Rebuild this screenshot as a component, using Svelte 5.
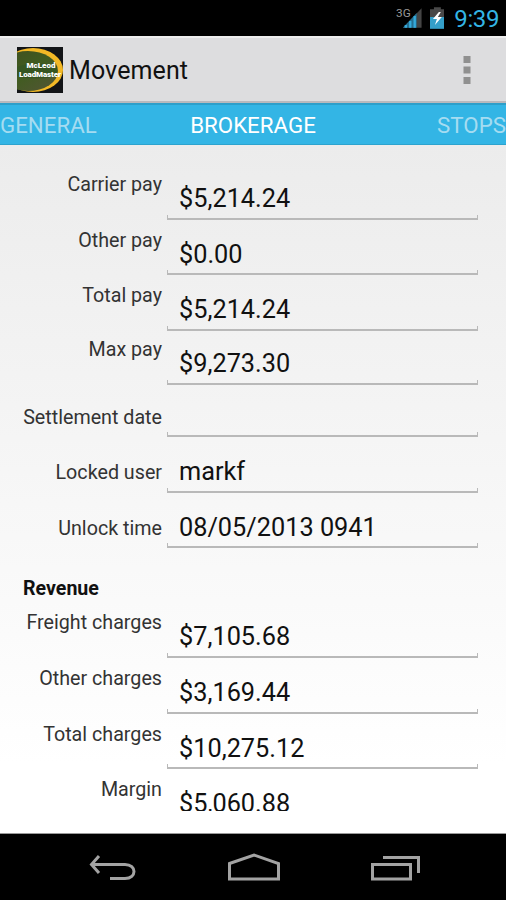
<script lang="ts">
	type Row = { label: string; value: string; height: number; level?: boolean; tight?: boolean };

	const pay: Row[] = [
		{ label: 'Carrier pay', value: '$5,214.24', height: 56 },
		{ label: 'Other pay', value: '$0.00', height: 55 },
		{ label: 'Total pay', value: '$5,214.24', height: 56 },
		{ label: 'Max pay', value: '$9,273.30', height: 54, tight: true },
		{ label: 'Settlement date', value: '', height: 52, level: true, tight: true },
		{ label: 'Locked user', value: 'markf', height: 56, level: true },
		{ label: 'Unlock time', value: '08/05/2013 0941', height: 55, level: true }
	];

	const revenue: Row[] = [
		{ label: 'Freight charges', value: '$7,105.68', height: 56 },
		{ label: 'Other charges', value: '$3,169.44', height: 56 },
		{ label: 'Total charges', value: '$10,275.12', height: 55 },
		{ label: 'Margin', value: '$5,060.88', height: 56 }
	];
</script>

{#snippet field(row: Row)}
	<div class={['row', row.level && 'level', row.tight && 'tight']} style="height: {row.height}px">
		<span class="label">{row.label}</span>
		<span class="value">{row.value}</span>
	</div>
{/snippet}

<div class="phone">
	<div class="status">
		<svg class="signal" width="28" height="24" viewBox="0 0 28 24">
			<path d="M7 22 26 2V22Z" fill="#444" />
			<path d="M7 22 21 7V22Z" fill="#236f91" />
			<path d="M10 22v-3M14.500 22v-7M19 22V10" stroke="#35a9da" stroke-width="2.4" />
			<text x="0" y="11" font-size="12" fill="#999" stroke="#000" stroke-width="2" paint-order="stroke">3G</text>
		</svg>
		<svg class="battery" width="15" height="22" viewBox="0 0 15 22">
			<path d="M4 0h7v2h4v8H0V2h4Z" fill="#484848" />
			<path d="M0 10h15v12H0Z" fill="#349fc9" />
			<path d="m9 5-6 7h4l-2 6 7-8H8l3-5Z" fill="#fff" />
		</svg>
		<span class="clock">9:39</span>
	</div>

	<header>
		<svg class="logo" width="46" height="46" viewBox="0 0 46 46">
			<defs>
				<linearGradient id="green" x1="0" y1="0" x2="1" y2="1">
					<stop offset="0" stop-color="#3f4d20" />
					<stop offset=".5" stop-color="#405c20" />
					<stop offset="1" stop-color="#555437" />
				</linearGradient>
			</defs>
			<rect width="46" height="46" fill="#121417" />
			<ellipse cx="16" cy="23" rx="30" ry="22" fill="#f2b826" />
			<ellipse cx="11" cy="24" rx="30" ry="20" fill="url(#green)" />
			<path d="M0 20Q20 13 40 19V29Q18 34 0 29Z" fill="#365522" />
			<text x="24" y="21" textLength="29">McLeod</text>
			<text x="23" y="30" textLength="42">LoadMaster</text>
		</svg>
		<h1>Movement</h1>
		<svg class="more" width="8" height="30" viewBox="0 0 8 30">
			<path d="M.5 1h7v7h-7ZM.5 11.500h7v7h-7ZM.5 22h7v7h-7Z" fill="#909090" />
		</svg>
	</header>

	<nav>
		<span>GENERAL</span>
		<span class="active">BROKERAGE</span>
		<span>STOPS</span>
	</nav>

	<main>
		<div class="scroll">
			{#each pay as row}
				{@render field(row)}
			{/each}
			<h2>Revenue</h2>
			{#each revenue as row}
				{@render field(row)}
			{/each}
		</div>
	</main>

	<footer>
		<svg width="50" height="30" viewBox="0 0 50 30">
			<path d="M12 3 4.500 11.500 12 20M4.500 11.500H38C50 11.500 50 25.500 38 25.500H23" />
		</svg>
		<svg width="54" height="30" viewBox="0 0 54 30">
			<path d="M2.500 10.500 27 2 51.500 10.500V26H2.500Z" />
		</svg>
		<svg width="50" height="30" viewBox="0 0 50 30">
			<path d="M1.500 11.500H39.500V26H1.500ZM12 4.500H47.500V20" />
		</svg>
	</footer>
</div>

<style>
	:global(body) {
		margin: 0;
	}

	.phone {
		display: flex;
		flex-direction: column;
		width: 506px;
		height: 900px;
		overflow: hidden;
		font-family: Roboto, sans-serif;
		color: #111;
	}

	.status {
		display: flex;
		height: 36px;
		box-sizing: border-box;
		padding: 0 7px 0 396px;
		background: #000;
	}

	.signal {
		margin-top: 6px;
	}

	.battery {
		margin: 7px 0 0 6px;
	}

	.clock {
		margin-left: 10px;
		font-size: 24px;
		line-height: 38px;
		letter-spacing: -0.4px;
		color: #33b5e5;
	}

	header {
		display: flex;
		align-items: center;
		height: 67px;
		box-sizing: border-box;
		padding: 0 35px 0 17px;
		border-top: 2px solid #eee;
		border-bottom: 2px solid #b9b9bd;
		background: #dddddf;
	}

	.logo text {
		font-size: 8px;
		font-weight: 900;
		fill: #fff;
		text-anchor: middle;
	}

	h1 {
		flex: 1;
		margin: 2px 0 0 6px;
		font-size: 25px;
		font-weight: 400;
		letter-spacing: 0.1px;
	}

	nav {
		display: grid;
		grid-template-columns: 1fr auto 1fr;
		height: 42px;
		box-sizing: border-box;
		border-top: 2px solid #2d9fca;
		border-bottom: 1px solid #2ca3ce;
		background: #33b5e5;
		font-size: 22.3px;
		line-height: 40px;
		color: #a5dcf1;
	}

	nav span:last-child {
		text-align: right;
	}

	.active {
		color: #fff;
	}

	main {
		height: 689px;
		box-sizing: border-box;
		padding: 19px 28px 0 22px;
		border-bottom: 1px solid #999;
		background: linear-gradient(#ececec, #fff 90%);
	}

	.scroll {
		height: 647px;
		overflow: hidden;
	}

	.row {
		display: flex;
	}

	.label {
		width: 140px;
		margin-right: 5px;
		padding-top: 8px;
		font-size: 19.7px;
		line-height: 25px;
		text-align: right;
		white-space: nowrap;
		color: #333;
	}

	.tight .label {
		padding-top: 6px;
	}

	.level .label {
		padding-top: 23px;
	}

	.level.tight .label {
		padding-top: 20px;
	}

	.value {
		position: relative;
		flex: 1;
		box-sizing: border-box;
		padding: 20px 0 0 12px;
		border-bottom: 2px solid #b9b9b9;
		font-size: 25.3px;
		line-height: 30px;
	}

	.tight .value {
		padding-top: 18px;
	}

	/* raised ends of the input underline */
	.value::after {
		content: '';
		position: absolute;
		inset: auto 0 0;
		height: 3px;
		border: solid #b9b9b9;
		border-width: 0 1.5px;
	}

	h2 {
		height: 54px;
		margin: 0;
		padding-left: 1px;
		box-sizing: border-box;
		padding-top: 28px;
		font-size: 19.6px;
		line-height: 26px;
	}

	footer {
		display: flex;
		justify-content: center;
		align-items: center;
		gap: 90px;
		height: 66px;
		box-sizing: border-box;
		padding: 2px 0 0 2px;
		background: #000;
	}

	footer path {
		fill: none;
		stroke: #a3a3a3;
		stroke-width: 3;
	}
</style>
